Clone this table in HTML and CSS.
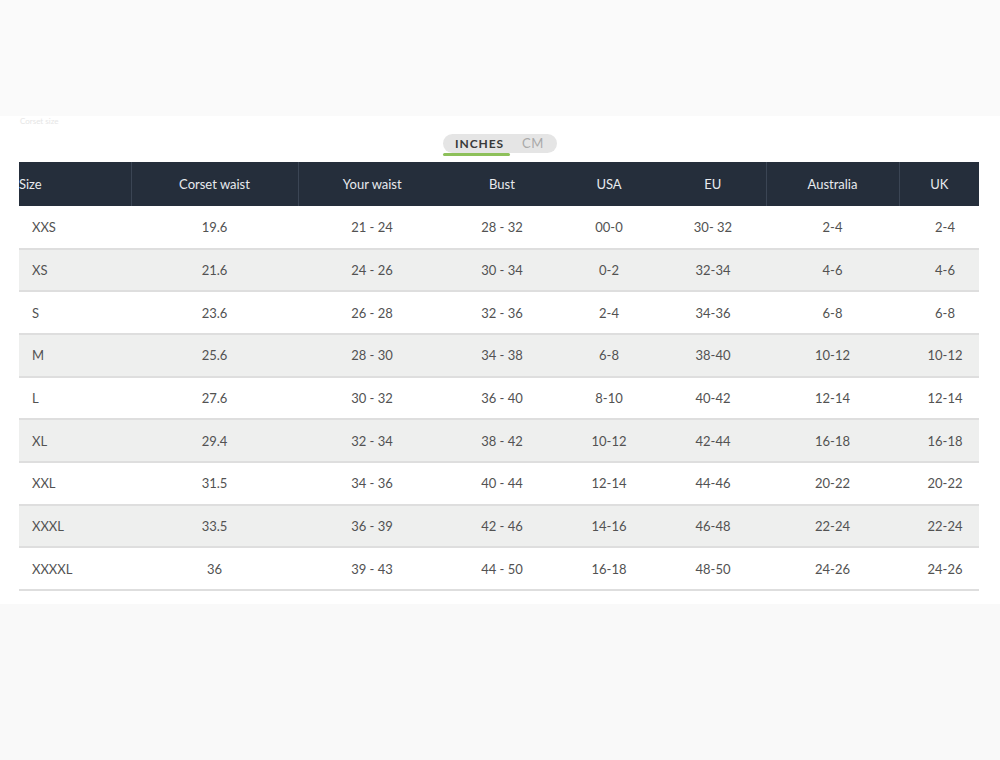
FILE: index.html
```html
<!DOCTYPE html>
<html lang="en">
<head>
<meta charset="utf-8">
<title>Size chart</title>
<link rel="stylesheet" href="styles.css">
</head>
<body>
<div class="topband"></div>
<main class="sheet">
  <div class="caption">Corset size</div>
  <div class="toggle-row">
    <div class="toggle">
      <span class="seg active">INCHES</span>
      <span class="seg">CM</span>
    </div>
  </div>
  <table class="chart">
    <colgroup>
      <col class="c1"><col class="c2"><col class="c3"><col class="c4"><col class="c5"><col class="c6"><col class="c7"><col class="c8">
    </colgroup>
    <thead>
      <tr>
        <th class="first div">Size</th>
        <th class="div">Corset waist</th>
        <th>Your waist</th>
        <th>Bust</th>
        <th>USA</th>
        <th class="div">EU</th>
        <th class="div">Australia</th>
        <th>UK</th>
      </tr>
    </thead>
    <tbody>
      <tr><td class="first">XXS</td><td>19.6</td><td>21 - 24</td><td>28 - 32</td><td>00-0</td><td>30- 32</td><td>2-4</td><td class="uk">2-4</td></tr>
      <tr><td class="first">XS</td><td>21.6</td><td>24 - 26</td><td>30 - 34</td><td>0-2</td><td>32-34</td><td>4-6</td><td class="uk">4-6</td></tr>
      <tr><td class="first">S</td><td>23.6</td><td>26 - 28</td><td>32 - 36</td><td>2-4</td><td>34-36</td><td>6-8</td><td class="uk">6-8</td></tr>
      <tr><td class="first">M</td><td>25.6</td><td>28 - 30</td><td>34 - 38</td><td>6-8</td><td>38-40</td><td>10-12</td><td class="uk">10-12</td></tr>
      <tr><td class="first">L</td><td>27.6</td><td>30 - 32</td><td>36 - 40</td><td>8-10</td><td>40-42</td><td>12-14</td><td class="uk">12-14</td></tr>
      <tr><td class="first">XL</td><td>29.4</td><td>32 - 34</td><td>38 - 42</td><td>10-12</td><td>42-44</td><td>16-18</td><td class="uk">16-18</td></tr>
      <tr><td class="first">XXL</td><td>31.5</td><td>34 - 36</td><td>40 - 44</td><td>12-14</td><td>44-46</td><td>20-22</td><td class="uk">20-22</td></tr>
      <tr><td class="first">XXXL</td><td>33.5</td><td>36 - 39</td><td>42 - 46</td><td>14-16</td><td>46-48</td><td>22-24</td><td class="uk">22-24</td></tr>
      <tr><td class="first">XXXXL</td><td>36</td><td>39 - 43</td><td>44 - 50</td><td>16-18</td><td>48-50</td><td>24-26</td><td class="uk">24-26</td></tr>
    </tbody>
  </table>
</main>
</body>
</html>
```

FILE: styles.css
```css
html, body {
  margin: 0;
  padding: 0;
}
body {
  background: #f9f9f9;
  font-family: Lato, "Open Sans", Arial, sans-serif;
  color: #4a4a4a;
}
.topband {
  height: 116px;
  background: #fafafa;
}
.sheet {
  background: #fff;
  height: 488px;
  padding: 0 21px 0 19px;
  box-sizing: border-box;
}
.caption {
  height: 12px;
  font-size: 8px;
  line-height: 10px;
  color: #e6e6e6;
  padding-left: 1px;
}
.toggle-row {
  display: flex;
  justify-content: center;
  padding-top: 6px;
  padding-left: 2px;
}
.toggle {
  position: relative;
  display: flex;
  align-items: center;
  height: 19px;
  background: #e5e5e5;
  border-radius: 10px;
  padding: 0 13px 0 12px;
  gap: 18px;
}
.seg {
  font-size: 13px;
  letter-spacing: 0.6px;
  color: #a9a9a9;
  line-height: 19px;
}
.seg.active {
  position: relative;
  font-size: 12px;
  font-weight: 700;
  letter-spacing: 0.9px;
  color: #3a3a3a;
}
.seg.active::after {
  content: "";
  position: absolute;
  left: -12px;
  right: -6px;
  bottom: -3px;
  height: 3px;
  border-radius: 2px;
  background: #8dc05a;
}
.chart {
  margin-top: 9px;
  width: 960px;
  border-collapse: collapse;
  table-layout: fixed;
  font-size: 13px;
}
.c1 { width: 112px; }
.c2 { width: 167px; }
.c3 { width: 148px; }
.c4 { width: 112px; }
.c5 { width: 102px; }
.c6 { width: 106px; }
.c7 { width: 133px; }
.c8 { width: 80px; }
.chart th {
  height: 44px;
  padding: 0;
  background: #252e3b;
  color: #e8eaee;
  font-weight: 400;
  text-align: center;
}
.chart th.div {
  border-right: 1px solid #3b4554;
}
.chart th.first {
  text-align: left;
  padding-left: 0;
}
.chart tbody tr {
  height: 42.67px;
}
.chart td {
  padding: 0;
  text-align: center;
  border-bottom: 2px solid #dedede;
  color: #525252;
}
.chart td.first {
  text-align: left;
  padding-left: 13px;
}
.chart td.uk {
  padding-left: 12px;
}
.chart tbody tr:nth-child(even) td {
  background: #eeefee;
}
```
